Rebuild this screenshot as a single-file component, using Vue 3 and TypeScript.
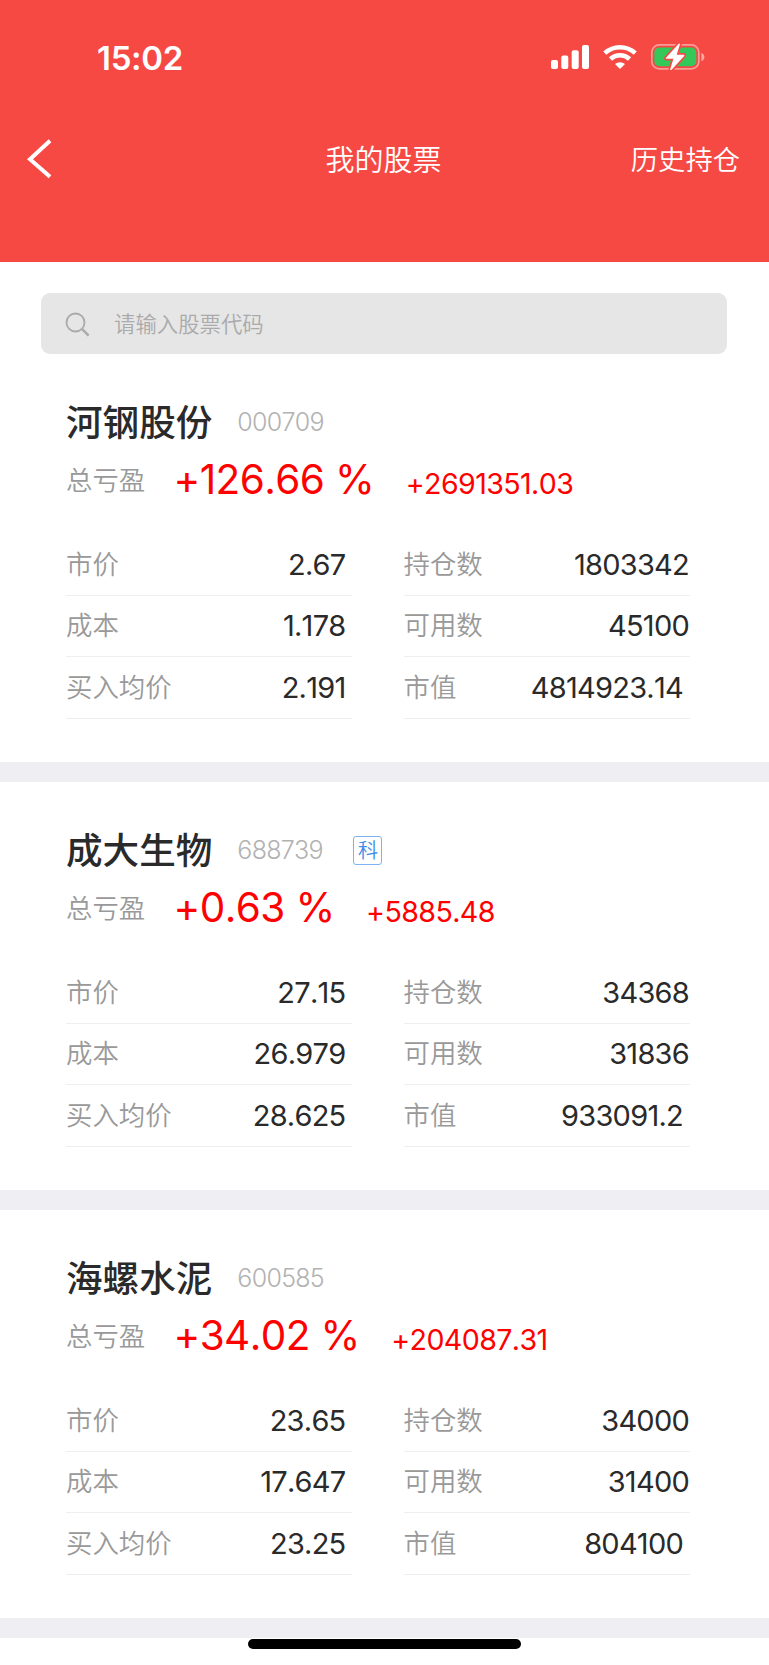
<script setup lang="ts">
interface Cell {
  label: string
  value: string
  inset?: boolean
}

interface Holding {
  name: string
  code: string
  tag?: string
  rate: string
  profit: string
  left: Cell[]
  right: Cell[]
}

function holding(
  name: string,
  code: string,
  rate: string,
  profit: string,
  price: string,
  cost: string,
  average: string,
  held: string,
  available: string,
  worth: string,
  tag?: string,
): Holding {
  return {
    name,
    code,
    rate,
    profit,
    tag,
    left: [
      { label: '市价', value: price },
      { label: '成本', value: cost },
      { label: '买入均价', value: average },
    ],
    right: [
      { label: '持仓数', value: held },
      { label: '可用数', value: available },
      { label: '市值', value: worth, inset: true },
    ],
  }
}

const holdings: Holding[] = [
  holding('河钢股份', '000709', '+126.66 %', '+2691351.03', '2.67', '1.178', '2.191', '1803342', '45100', '4814923.14'),
  holding('成大生物', '688739', '+0.63 %', '+5885.48', '27.15', '26.979', '28.625', '34368', '31836', '933091.2', '科'),
  holding('海螺水泥', '600585', '+34.02 %', '+204087.31', '23.65', '17.647', '23.25', '34000', '31400', '804100'),
]
</script>

<template>
  <div class="screen">
    <header class="header">
      <div class="status">
        <span class="time">15:02</span>
        <svg class="status-icons" width="156" height="28" viewBox="0 0 156 28">
          <g fill="#fff">
            <rect x="1" y="17" width="7" height="9" rx="2" />
            <rect x="11.3" y="12.4" width="7" height="13.6" rx="2" />
            <rect x="21.7" y="7.2" width="7" height="18.8" rx="2" />
            <rect x="32" y="2" width="7" height="24" rx="2" />
          </g>
          <g fill="none" stroke="#fff" stroke-width="4.6">
            <path d="M54.8 10.1a22.5 22.5 0 0 1 30.4 0" />
            <path d="M60.4 16a14.3 14.3 0 0 1 19.2 0" />
          </g>
          <path d="M65 21.1a7.5 7.5 0 0 1 10 0L70.5 25.6a.7.7 0 0 1-1 0z" fill="#fff" />
          <rect x="101.8" y="1.9" width="47" height="24" rx="7.5" fill="none" stroke="#fff" stroke-opacity=".45" stroke-width="1.7" />
          <path d="M151.3 9.9a4.4 4.4 0 0 1 0 8.4z" fill="#fff" fill-opacity=".5" />
          <rect x="104.3" y="4.6" width="42" height="18.7" rx="5" fill="#34c759" />
          <path d="M128.7.7 116 14.8q-.7 1 .5 1h6.9l-3.2 10.4q.1 1.3 1.2.7l12.8-14q.6-1-.6-1.1h-6.9l3.2-10.3q-.1-1.3-1.2-.8z" fill="#fff" stroke="#f74944" stroke-width="3.4" paint-order="stroke" />
        </svg>
      </div>
      <nav class="nav">
        <svg class="back" width="26" height="40" viewBox="0 0 26 40">
          <path d="M23 1.8 3 20.2 23 37.8" fill="none" stroke="#fff" stroke-width="4" />
        </svg>
        <h1 class="title">我的股票</h1>
        <a class="history">历史持仓</a>
      </nav>
    </header>

    <div class="search">
      <svg class="search-icon" width="26" height="26" viewBox="0 0 26 26">
        <g fill="none" stroke="#aaa" stroke-width="1.8">
          <circle cx="10.5" cy="10.5" r="9" />
          <path d="M17.2 17.2 23.6 23.6" stroke-width="2.4" />
        </g>
      </svg>
      <span class="placeholder">请输入股票代码</span>
    </div>

    <main>
      <section v-for="item in holdings" :key="item.code" class="card">
        <div class="head">
          <h2 class="name">{{ item.name }}</h2>
          <span class="code">{{ item.code }}</span>
          <span v-if="item.tag" class="tag">{{ item.tag }}</span>
        </div>
        <div class="sum">
          <span class="sum-label">总亏盈</span>
          <span class="rate">{{ item.rate }}</span>
          <span class="profit">{{ item.profit }}</span>
        </div>
        <div class="grid">
          <div class="col">
            <div v-for="cell in item.left" :key="cell.label" class="row">
              <span class="label">{{ cell.label }}</span>
              <span class="value">{{ cell.value }}</span>
            </div>
          </div>
          <div class="col col-right">
            <div v-for="cell in item.right" :key="cell.label" class="row">
              <span class="label">{{ cell.label }}</span>
              <span class="value" :class="{ inset: cell.inset }">{{ cell.value }}</span>
            </div>
          </div>
        </div>
      </section>
    </main>
    <div class="home-bar"></div>
  </div>
</template>

<style>
body {
  margin: 0;
  background: #fff;
}
</style>

<style scoped>
.screen {
  box-sizing: border-box;
  width: 769px;
  height: 1665px;
  overflow: hidden;
  background: #fff;
  font-family: Inter, "Noto Sans CJK SC", sans-serif;
  font-weight: 400;
  font-kerning: none;
}
.header {
  height: 262px;
  background: #f74944;
  color: #fff;
}
.status {
  display: flex;
  justify-content: space-between;
  align-items: center;
  height: 116px;
  padding: 0 63px 0 97px;
}
.time {
  font-size: 33px;
  font-weight: 600;
  line-height: 40px;
  letter-spacing: -0.3px;
}
.status-icons {
  margin-top: -2px;
}
.nav {
  display: grid;
  grid-template-columns: 1fr auto 1fr;
  align-items: center;
  height: 86px;
  padding: 0 29px 0 27px;
}
.title {
  margin: 0;
  padding-top: 3px;
  font-size: 29px;
  font-weight: 350;
  line-height: 42px;
}
.history {
  justify-self: end;
  padding-top: 4px;
  font-size: 27.3px;
  font-weight: 350;
  line-height: 42px;
}
.search {
  display: flex;
  align-items: center;
  box-sizing: border-box;
  height: 61px;
  margin: 31px 42px 0 41px;
  padding-left: 24px;
  border-radius: 9px;
  background: #e6e6e6;
}
.search-icon {
  margin-top: 3px;
}
.placeholder {
  margin-left: 23px;
  color: #aaa;
  font-size: 21.4px;
  font-weight: 350;
  line-height: 32px;
}
.card {
  box-sizing: border-box;
  height: 428px;
  padding: 42px 79px 0 66px;
  border-bottom: 20px solid #eeeef3;
}
.head {
  display: flex;
  align-items: center;
  height: 52px;
}
.name {
  margin: 0;
  padding-top: 2px;
  color: #2a2a2a;
  font-size: 36.6px;
  font-weight: 500;
  line-height: 52px;
}
.code {
  margin-left: 25px;
  color: #b2b2b2;
  font-size: 25px;
  font-weight: 300;
  letter-spacing: -0.7px;
}
.tag {
  box-sizing: border-box;
  width: 29px;
  height: 29px;
  margin: 1px 0 0 30.5px;
  border: 1px solid #7db3f2;
  border-radius: 3px;
  color: #3d8ce8;
  font-size: 20px;
  font-weight: 350;
  line-height: 28px;
  text-align: center;
}
.sum {
  display: flex;
  align-items: flex-start;
  height: 86px;
  white-space: nowrap;
}
.sum-label {
  width: 107.5px;
  padding-top: 12px;
  color: #999;
  font-size: 26.4px;
  font-weight: 350;
  line-height: 40px;
}
.rate {
  padding-top: 1px;
  color: #f00;
  font-size: 40.5px;
  font-weight: 380;
  letter-spacing: -0.6px;
  line-height: 62px;
}
.profit {
  margin-left: 31.5px;
  padding-top: 15px;
  color: #f00;
  font-size: 28.6px;
  line-height: 42px;
  letter-spacing: -0.6px;
}
.grid {
  display: grid;
  grid-template-columns: 286px 286px;
  column-gap: 51.5px;
}
.row {
  display: flex;
  justify-content: space-between;
  align-items: center;
  box-sizing: border-box;
  height: 61.6px;
  padding-right: 6.5px;
  border-bottom: 1px solid #eee;
}
.col-right .row {
  padding-right: 0.5px;
}
.label {
  margin-top: -4px;
  color: #999;
  font-size: 26.4px;
  font-weight: 350;
}
.value {
  color: #2a2a2a;
  font-size: 29px;
  letter-spacing: -0.75px;
}
.value.inset {
  margin-right: 6px;
}
.home-bar {
  width: 273px;
  height: 10px;
  margin: 1px auto 0;
  border-radius: 5px;
  background: #000;
}
</style>
